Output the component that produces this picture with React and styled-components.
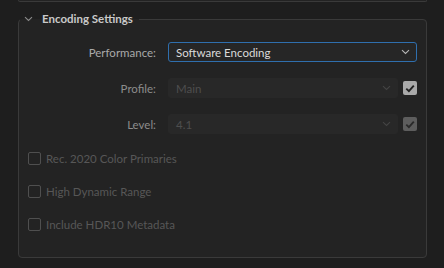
import React from 'react'
import styled, { createGlobalStyle } from 'styled-components'

const Global = createGlobalStyle`
  html, body {
    margin: 0;
    padding: 0;
    background: #1e1e1e;
  }
  body {
    width: 444px;
    height: 268px;
    overflow: hidden;
    font-family: Lato, "Liberation Sans", sans-serif;
  }
`

const Page = styled.div`
  padding: 0 17px 0 18px;
`

const PrevPanel = styled.div`
  height: 1px;
  background: #232323;
  border: 1px solid #3a3a3a;
  border-top: none;
  border-radius: 0 0 4px 4px;
`

const Fieldset = styled.fieldset`
  margin: 9px 0 0;
  padding: 15px 9px 23px 9px;
  border: 1px solid #3a3a3a;
  border-radius: 4px;
  background: #232323;
  display: flex;
  flex-direction: column;
  min-width: 0;
`

const Legend = styled.legend`
  display: flex;
  align-items: center;
  gap: 9px;
  padding: 0 6px 0 4px;
  margin-left: -8px;
  color: #c9c9c9;
  font-size: 11.5px;
  font-weight: 700;
  line-height: 16px;
`

const Row = styled.div`
  display: flex;
  align-items: center;
  height: 20px;
  margin-bottom: 16px;
`

const Label = styled.div`
  width: 128px;
  text-align: right;
  margin-right: 12px;
  font-size: 11.5px;
  color: ${p => (p.dim ? '#8c8c8c' : '#a9a9a9')};
`

const Select = styled.div`
  flex: 1;
  height: 20px;
  box-sizing: border-box;
  display: flex;
  align-items: center;
  justify-content: space-between;
  padding: 0 6px 0 7px;
  border-radius: 3px;
  font-size: 11.5px;
  background: ${p => (p.active ? '#262626' : '#282828')};
  border: ${p => (p.active ? '1.5px solid #2f6fae' : '1px solid #282828')};
  color: ${p => (p.active ? '#dadada' : '#4e4e4e')};
`

const Check = styled.div`
  width: 14px;
  height: 14px;
  margin-left: 5px;
  border-radius: 2px;
  background: ${p => p.bg};
  display: flex;
  align-items: center;
  justify-content: center;
`

const CheckRow = styled.div`
  display: flex;
  align-items: center;
  gap: 5px;
  height: 20px;
  margin-top: ${p => p.gap}px;
  font-size: 11.5px;
  color: #575757;
`

const Box = styled.div`
  width: 13px;
  height: 13px;
  box-sizing: border-box;
  border: 1.5px solid #4f4f4f;
  border-radius: 2px;
`

const Chevron = ({ color, w = 9 }) => (
  <svg width={w} height="6" viewBox="0 0 9 6">
    <path d="M1 1.2 L4.5 4.5 L8 1.2" fill="none" stroke={color} strokeWidth="1.1" />
  </svg>
)

const Tick = ({ color }) => (
  <svg width="10" height="9" viewBox="0 0 10 9">
    <path d="M1.3 4.6 L3.9 7.1 L8.8 1.6" fill="none" stroke={color} strokeWidth="1.9" />
  </svg>
)

export default function App() {
  return (
    <Page>
      <Global />
      <PrevPanel />
      <Fieldset>
        <Legend>
          <Chevron color="#8a8a8a" />
          Encoding Settings
        </Legend>
        <Row>
          <Label>Performance:</Label>
          <Select active>
            Software Encoding
            <Chevron color="#b5b5b5" />
          </Select>
        </Row>
        <Row>
          <Label dim>Profile:</Label>
          <Select>
            Main
            <Chevron color="#444" />
          </Select>
          <Check bg="#a9a9a9">
            <Tick color="#222" />
          </Check>
        </Row>
        <Row>
          <Label dim>Level:</Label>
          <Select>
            4.1
            <Chevron color="#444" />
          </Select>
          <Check bg="#5d5d5d">
            <Tick color="#2a2a2a" />
          </Check>
        </Row>
        <CheckRow gap={-2}>
          <Box />
          Rec. 2020 Color Primaries
        </CheckRow>
        <CheckRow gap={13}>
          <Box />
          High Dynamic Range
        </CheckRow>
        <CheckRow gap={13}>
          <Box />
          Include HDR10 Metadata
        </CheckRow>
      </Fieldset>
    </Page>
  )
}
